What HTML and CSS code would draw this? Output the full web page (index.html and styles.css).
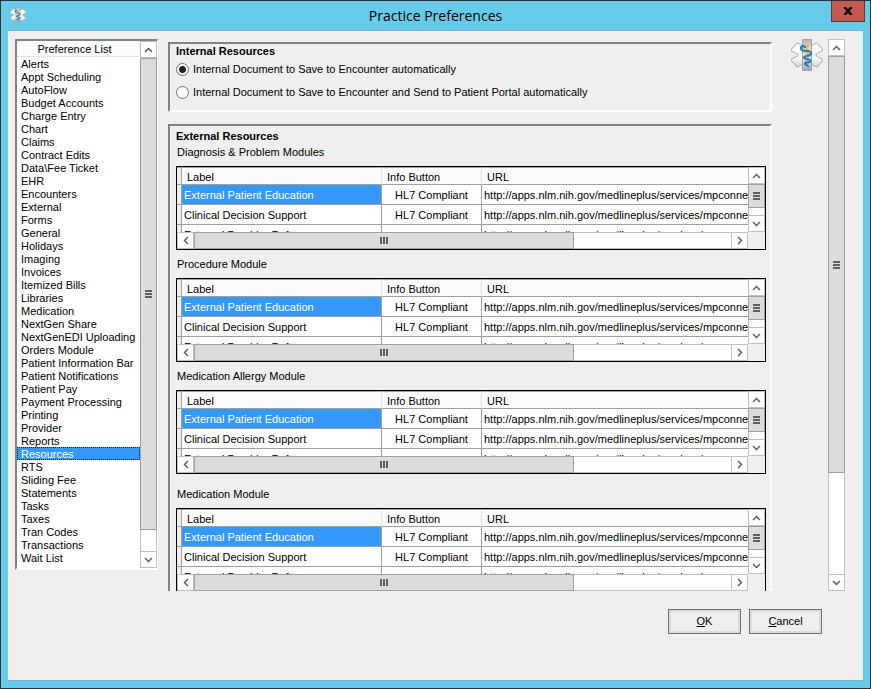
FILE: index.html
```html
<!DOCTYPE html>
<html lang="en">
<head>
  <meta charset="UTF-8" />
  <meta name="viewport" content="width=device-width, initial-scale=1.0"/>
  <title>Practice Preferences</title>
  <link rel="stylesheet" href="styles.css">
</head>
<body>

  <svg class="defs" width="0" height="0" aria-hidden="true">
    <defs>
      <linearGradient id="armGrad" x1="0" y1="0" x2="0" y2="1">
        <stop offset="0" stop-color="#ffffff"/>
        <stop offset="0.6" stop-color="#fafafa"/>
        <stop offset="1" stop-color="#d3d6da"/>
      </linearGradient>
      <linearGradient id="barGrad" x1="0" y1="0" x2="0" y2="1">
        <stop offset="0" stop-color="#b0b3ba"/>
        <stop offset="0.3" stop-color="#f3dcb8"/>
        <stop offset="0.7" stop-color="#e0e0e2"/>
        <stop offset="1" stop-color="#9a9ea7"/>
      </linearGradient>
    </defs>
    <symbol id="star" viewBox="0 0 32 32">
      <path d="M5.500 4 8 4.500 11.500 7H20.500L24 4.500 26.500 4 28 7 31 9 31.500 12 27 14 24.500 16 27 18 31.500 20 31 23 28 25 26.500 28 24 27.500 20.500 25H11.500L8 27.500 5.500 28 4 25 1 23 .5 20 5 18 7.500 16 5 14 .5 12 1 9 4 7Z" fill="url(#armGrad)" stroke="#a9acb1"/>
      <path d="M11.500 .5H20.500V31.500H11.500Z" fill="url(#barGrad)" stroke="#a0a3aa"/>
      <path d="M14.500 5H17.500V28H14.500Z" fill="#f2b765"/>
      <path d="M14.500 9C13 6 9.500 7 10 9.500S13 12 16 12 21 13.500 19.500 15.500 13 16.500 13 18.500 19.500 19.500 19.500 22 14 22.500 14 24.500 17.500 25.500 17 28" fill="none" stroke="#1d84c4" stroke-width="2.200"/>
    </symbol>
    <symbol id="up" viewBox="0 0 9 6"><path d="M1 5 4.500 1.500 8 5" fill="none" stroke="#606060" stroke-width="1.500"/></symbol>
    <symbol id="down" viewBox="0 0 9 6"><path d="M1 1 4.500 4.500 8 1" fill="none" stroke="#606060" stroke-width="1.500"/></symbol>
    <symbol id="left" viewBox="0 0 6 9"><path d="M5 1 1.500 4.500 5 8" fill="none" stroke="#606060" stroke-width="1.500"/></symbol>
    <symbol id="right" viewBox="0 0 6 9"><path d="M1 1 4.500 4.500 1 8" fill="none" stroke="#606060" stroke-width="1.500"/></symbol>
  </svg>

  <div class="window">
    <header class="titlebar">
      <svg class="app-icon"><use href="#star"/></svg>
      <h1>Practice Preferences</h1>
      <button class="close-btn" type="button" aria-label="Close">
        <svg width="10" height="8" viewBox="0 0 10 8"><path d="M1.500 0 8.500 8M8.500 0 1.500 8" stroke="#000" stroke-width="2.500"/></svg>
      </button>
    </header>

    <div class="client">
      <div class="main">
        <div class="list-box">
          <div class="list-body">
            <label class="list-header" for="prefList">Preference List</label>
            <select id="prefList" size="40"></select>
          </div>
          <div class="scrollbar vertical">
            <button type="button" aria-label="Scroll up"><svg width="9" height="6"><use href="#up"/></svg></button>
            <div class="thumb list-thumb"></div>
            <div class="list-rest"></div>
            <button type="button" aria-label="Scroll down"><svg width="9" height="6"><use href="#down"/></svg></button>
          </div>
        </div>

        <div class="content">
          <fieldset class="panel internal">
            <h2>Internal Resources</h2>
            <label><input type="radio" name="saveMode" checked /> Internal Document to Save to Encounter automatically</label>
            <label><input type="radio" name="saveMode" /> Internal Document to Save to Encounter and Send to Patient Portal automatically</label>
          </fieldset>

          <section class="panel external">
            <h2>External Resources</h2>
            <div id="modules"></div>
          </section>
        </div>

        <svg class="logo"><use href="#star"/></svg>

        <div class="scrollbar vertical">
          <button type="button" aria-label="Scroll up"><svg width="9" height="6"><use href="#up"/></svg></button>
          <div class="thumb page-thumb"></div>
          <div class="page-rest"></div>
          <button type="button" aria-label="Scroll down"><svg width="9" height="6"><use href="#down"/></svg></button>
        </div>
      </div>

      <footer class="actions">
        <button type="button"><u>O</u>K</button>
        <button type="button"><u>C</u>ancel</button>
      </footer>
    </div>
  </div>

  <script>
    const preferences = [
      'Alerts', 'Appt Scheduling', 'AutoFlow', 'Budget Accounts', 'Charge Entry',
      'Chart', 'Claims', 'Contract Edits', 'Data\\Fee Ticket', 'EHR', 'Encounters',
      'External', 'Forms', 'General', 'Holidays', 'Imaging', 'Invoices',
      'Itemized Bills', 'Libraries', 'Medication', 'NextGen Share',
      'NextGenEDI Uploading', 'Orders Module', 'Patient Information Bar',
      'Patient Notifications', 'Patient Pay', 'Payment Processing', 'Printing',
      'Provider', 'Reports', 'Resources', 'RTS', 'Sliding Fee', 'Statements',
      'Tasks', 'Taxes', 'Tran Codes', 'Transactions', 'Wait List'
    ];

    const modules = [
      'Diagnosis & Problem Modules', 'Procedure Module',
      'Medication Allergy Module', 'Medication Module'
    ];

    const resources = [
      { label: 'External Patient Education', info: 'HL7 Compliant' },
      { label: 'Clinical Decision Support', info: 'HL7 Compliant' },
      { label: 'External Provider Refere', info: '' }
    ];
    const url = 'http://apps.nlm.nih.gov/medlineplus/services/mpconne';

    const prefList = document.getElementById('prefList');
    preferences.forEach(name => prefList.add(new Option(name)));
    prefList.value = 'Resources';

    const rows = resources.map((item, index) => `
      <tr>
        <td></td>
        <td class="${index === 0 ? 'selected' : ''}">${item.label}</td>
        <td class="info">${item.info}</td>
        <td>${url}</td>
      </tr>
    `).join('');

    document.getElementById('modules').innerHTML = modules.map(name => `
      <div class="module">
        <h3>${name.replace('&', '&amp;')}</h3>
        <div class="grid">
          <div class="grid-view">
            <table aria-label="${name.replace('&', '&amp;')}">
              <colgroup><col class="col-mark"><col class="col-label"><col class="col-info"><col></colgroup>
              <thead>
                <tr><th></th><th>Label</th><th>Info Button</th><th>URL</th></tr>
              </thead>
              <tbody>${rows}</tbody>
            </table>
          </div>
          <div class="scrollbar vertical">
            <button type="button" aria-label="Scroll up"><svg width="9" height="6"><use href="#up"/></svg></button>
            <div class="thumb grid-thumb"></div>
            <div class="grid-rest"></div>
            <button type="button" aria-label="Scroll down"><svg width="9" height="6"><use href="#down"/></svg></button>
          </div>
          <div class="scrollbar horizontal">
            <button type="button" aria-label="Scroll left"><svg width="6" height="9"><use href="#left"/></svg></button>
            <div class="thumb wide-thumb"></div>
            <div class="wide-rest"></div>
            <button type="button" aria-label="Scroll right"><svg width="6" height="9"><use href="#right"/></svg></button>
          </div>
        </div>
      </div>
    `).join('');
  </script>

</body>
</html>
```
FILE: styles.css
```css
* {
  box-sizing: border-box;
}

body {
  margin: 0;
  font-family: "Liberation Sans", Arial, sans-serif;
  font-size: 11px;
  line-height: 13px;
  color: #000;
}

h1, h2, h3 {
  margin: 0;
}

button {
  font: inherit;
  color: inherit;
  padding: 0;
}

.defs {
  position: absolute;
}

.window {
  height: 100vh;
  display: flex;
  flex-direction: column;
  padding: 0 7px 7px;
  border: 1px solid #2d3036;
  background: #66cae9;
}

/* title bar */
.titlebar {
  display: flex;
  justify-content: space-between;
  height: 29px;
}

.app-icon {
  width: 16px;
  height: 16px;
  margin: 6px 0 0 2px;
}

.titlebar h1 {
  flex: 1;
  padding-left: 14px;
  text-align: center;
  font-family: "Open Sans", sans-serif;
  font-size: 14px;
  font-weight: normal;
  line-height: 29px;
}

.close-btn {
  display: flex;
  align-items: center;
  justify-content: center;
  width: 34px;
  height: 21px;
  margin-right: -2px;
  border: 1px solid #5c3a38;
  border-top: none;
  background: #c35a50;
}

.client {
  flex: 1;
  min-height: 0;
  display: flex;
  flex-direction: column;
  padding: 8px 18px 46px 7px;
  border: 1px solid #7fb0c4;
  border-width: 1px 0;
  background: #efefef;
}

.main {
  flex: 1;
  min-height: 0;
  display: flex;
}

/* preference list */
.list-box {
  display: flex;
  width: 143px;
  margin: 0 10px 21px 0;
  border: 2px solid;
  border-color: #828282 #fff #fff #828282;
  border-right-width: 1px;
  background: #fff;
}

.list-body {
  flex: 1;
  display: flex;
  flex-direction: column;
  min-width: 0;
}

.list-header {
  height: 16px;
  line-height: 16px;
  padding-right: 8px;
  text-align: center;
  border-bottom: 1px solid #e3e3e3;
  background: #fcfcfc;
}

#prefList {
  flex: 1;
  min-height: 0;
  padding: 0;
  border: none;
  border-radius: 0;
  outline: none;
  overflow: hidden;
  background: #fff;
  font: inherit;
  color: #000;
}

#prefList option {
  height: 13px;
  min-height: 13px;
  padding: 1px 0 0 4px;
  line-height: 13px;
}

#prefList option:checked {
  background-image: linear-gradient(#39f, #39f);
  -webkit-text-fill-color: #fff;
  outline: 1px dotted #123;
  outline-offset: -1px;
}

/* scrollbars */
.scrollbar {
  display: flex;
  background: #fff;
}

.scrollbar.vertical {
  flex-direction: column;
  width: 17px;
  border: 1px solid #c0c0c0;
  border-width: 0 1px;
}

.scrollbar.horizontal {
  height: 17px;
  border: 1px solid #c0c0c0;
  border-width: 1px 0;
}

.scrollbar button {
  flex: none;
  display: flex;
  align-items: center;
  justify-content: center;
  width: 15px;
  height: 17px;
  border: 1px solid #c0c0c0;
  border-width: 1px 0;
  background: #fff;
}

.scrollbar.horizontal button {
  width: 17px;
  height: 15px;
  border-width: 0 1px;
}

.thumb {
  display: flex;
  align-items: center;
  justify-content: center;
  border: 1px solid #a0a0a0;
  background: #dcdcdc;
}

.vertical .thumb {
  margin: 0 -1px;
}

.horizontal .thumb {
  margin: -1px 0;
}

.thumb::after {
  content: "";
  width: 7px;
  height: 8px;
  background: repeating-linear-gradient(#606060 0 2px, transparent 2px 3px);
}

.horizontal .thumb::after {
  width: 8px;
  height: 7px;
  background: repeating-linear-gradient(90deg, #606060 0 2px, transparent 2px 3px);
}

.list-thumb { flex: 473 0 0; }
.list-rest { flex: 21 0 0; }
.page-thumb { flex: 417 0 0; }
.page-rest { flex: 101 0 0; }
.grid-thumb { flex: 24 0 0; }
.grid-rest { flex: 7 0 0; }
.wide-thumb { flex: 379 0 0; }
.wide-rest { flex: 158 0 0; }

/* settings panels */
.content {
  flex: 1;
  min-width: 0;
  overflow: hidden;
  padding-top: 3px;
}

.panel {
  min-width: 0;
  margin: 0 0 12px;
  padding: 0 4px 0 6px;
  border: 2px solid;
  border-color: #828282 #fff #fff #828282;
}

.panel h2 {
  font-size: 11px;
  line-height: 14px;
}

.internal {
  height: 70px;
}

.internal label {
  display: flex;
  align-items: center;
  gap: 4px;
  height: 23px;
}

.internal input {
  appearance: none;
  flex: none;
  width: 13px;
  height: 13px;
  margin: 0;
  border: 1px solid #707070;
  border-radius: 50%;
  background: #fff;
}

.internal input:checked {
  background: radial-gradient(circle, #222 3px, #fff 4px);
}

.external {
  padding-top: 3px;
}

.external h2 {
  padding-bottom: 2px;
}

.module {
  margin-top: 7px;
}

.module:first-child {
  margin-top: 0;
}

.module:last-child {
  margin-top: 13px;
}

.module h3 {
  padding: 0 0 7px 1px;
  font-size: 11px;
  font-weight: normal;
  line-height: 14px;
}

.grid {
  display: grid;
  grid-template-columns: minmax(0, 1fr) 17px;
  grid-template-rows: 65px 17px;
  border: 1px solid #000;
}

.grid-view {
  overflow: hidden;
  background: #fff;
}

table {
  width: 100%;
  table-layout: fixed;
  border-collapse: separate;
  border-spacing: 0;
}

.col-mark { width: 5px; }
.col-label { width: 200px; }
.col-info { width: 100px; }

th, td {
  padding: 2px 0 0 2px;
  border: solid #a0a0a0;
  border-width: 0 1px 1px 0;
  white-space: nowrap;
  text-align: left;
  overflow: hidden;
}

th {
  height: 18px;
  padding-left: 5px;
  border-top: 1px solid #a0a0a0;
  border-right-color: #e3e3e3;
  background: #fcfcfc;
  font-weight: normal;
}

td {
  height: 20px;
}

th:first-child, td:first-child {
  padding: 0;
  border-right-color: #a0a0a0;
  background: #efefef;
}

th:last-child, td:last-child {
  border-right: none;
}

td.info {
  padding-left: 0;
  text-align: center;
}

td.selected {
  background: #39f;
  color: #fff;
}

.logo {
  flex: none;
  width: 32px;
  height: 32px;
  margin: 0 5px 0 19px;
}

/* dialog buttons */
.actions {
  display: flex;
  justify-content: flex-end;
  gap: 8px;
  padding: 18px 23px 0 0;
}

.actions button {
  width: 73px;
  height: 25px;
  border: 1px solid #707070;
  box-shadow: inset 0 0 0 2px #dcdcdc;
  background: #efefef;
}
```
